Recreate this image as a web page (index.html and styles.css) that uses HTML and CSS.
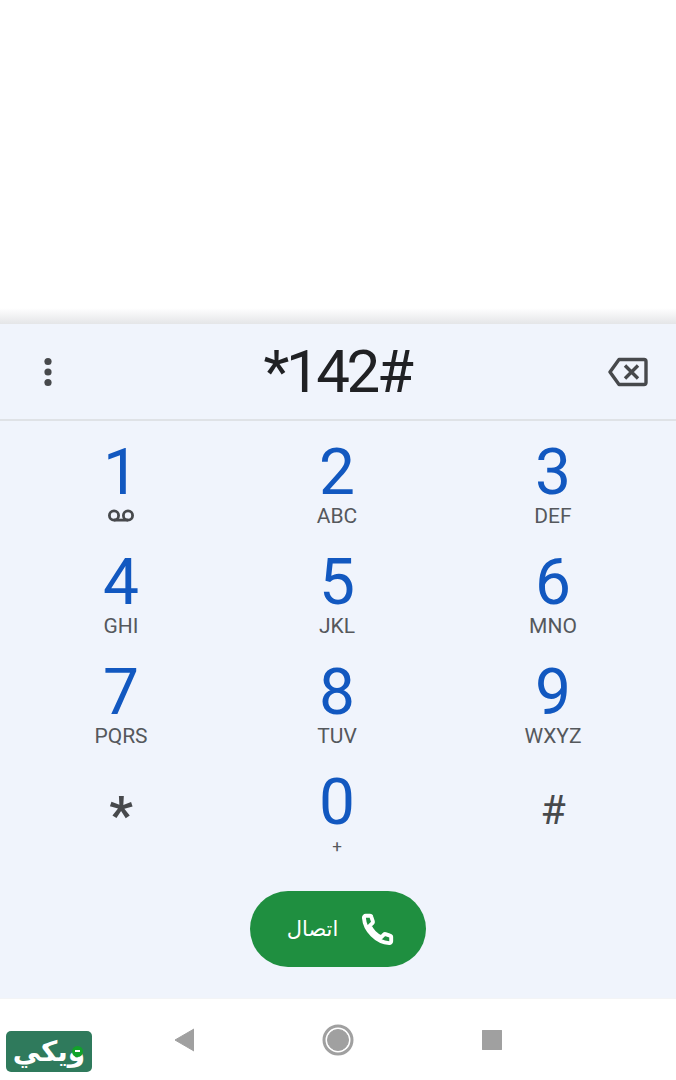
FILE: index.html
```html
<!DOCTYPE html>
<html lang="en">
<head>
    <meta charset="UTF-8">
    <title>Dialer</title>
    <link rel="stylesheet" href="styles.css">
</head>
<body>
<div class="blank"></div>
<div class="panel">
    <div class="number-bar">
        <svg class="more" width="12" height="30" viewBox="0 0 12 30">
            <circle cx="6" cy="4.5" r="3.6"/>
            <circle cx="6" cy="15" r="3.6"/>
            <circle cx="6" cy="25.5" r="3.6"/>
        </svg>
        <div class="number">*142#</div>
        <svg class="backspace" width="40" height="30" viewBox="0 0 40 30">
            <path d="M11 2.500H36a2 2 0 0 1 2 2V25.500a2 2 0 0 1-2 2H11L2 15Z"/>
            <path d="M17 8.500L30 21.500M30 8.500L17 21.500"/>
        </svg>
    </div>
    <div class="keypad">
        <div class="key"><div class="digit">1</div>
            <svg class="voicemail" width="28" height="13" viewBox="0 0 28 13">
                <circle cx="7" cy="6.500" r="4.600"/>
                <circle cx="21" cy="6.500" r="4.600"/>
                <path d="M7 11.100H21"/>
            </svg>
        </div>
        <div class="key"><div class="digit">2</div><div class="letters">ABC</div></div>
        <div class="key"><div class="digit">3</div><div class="letters">DEF</div></div>
        <div class="key"><div class="digit">4</div><div class="letters">GHI</div></div>
        <div class="key"><div class="digit">5</div><div class="letters">JKL</div></div>
        <div class="key"><div class="digit">6</div><div class="letters">MNO</div></div>
        <div class="key"><div class="digit">7</div><div class="letters">PQRS</div></div>
        <div class="key"><div class="digit">8</div><div class="letters">TUV</div></div>
        <div class="key"><div class="digit">9</div><div class="letters">WXYZ</div></div>
        <div class="key"><div class="symbol star">*</div></div>
        <div class="key"><div class="digit">0</div><div class="letters plus">+</div></div>
        <div class="key"><div class="symbol">#</div></div>
    </div>
    <div class="call-row">
        <div class="call-btn">
            <svg width="36" height="36" viewBox="0 0 24 24">
                <path d="M6.600 3.200c.5 0 .9.300 1 .8l1 3c.1.400 0 .8-.3 1.100L6.500 9.800c1.400 3.300 4.400 6.300 7.700 7.700l1.700-1.800c.3-.3.700-.4 1.100-.3l3 1c.5.100.8.500.8 1v2.800c0 .7-.6 1.300-1.300 1.200C11 20.800 3.200 13 2.600 4.400c0-.7.500-1.200 1.200-1.200Z"/>
            </svg>
            <span class="call-label" lang="ar" dir="rtl">اتصال</span>
        </div>
    </div>
</div>
<div class="nav-bar">
    <div class="logo"><span class="logo-text" lang="ar" dir="rtl">ويكي</span><span class="logo-dot"></span></div>
    <svg width="20" height="24" viewBox="0 0 20 24"><path class="nav-icon" d="M20 1V23L1 12Z"/></svg>
    <svg width="32" height="32" viewBox="0 0 32 32">
        <circle class="nav-ring" cx="16" cy="16" r="14"/>
        <circle class="nav-icon" cx="16" cy="16" r="10.500"/>
    </svg>
    <svg width="20" height="20" viewBox="0 0 20 20"><rect class="nav-icon" width="20" height="20" rx="1"/></svg>
</div>
</body>
</html>
```

FILE: styles.css
```css
body {
    margin: 0;
    background: white;
    font-family: Roboto, "DejaVu Sans", sans-serif;
}
.blank {
    height: 324px;
    background: linear-gradient(to bottom, white 308px, #e4e5e7 324px);
}
.panel {
    height: 674px;
    background: #f0f4fc;
}
.number-bar {
    height: 95px;
    border-bottom: 2px solid #dfe2e6;
    display: flex;
    align-items: center;
    justify-content: space-between;
    padding: 0 28px 0 42px;
}
.more {
    fill: #47494c;
}
.number {
    font-size: 60px;
    letter-spacing: -3.4px;
    color: #202124;
    margin-left: 12px;
}
.backspace {
    fill: none;
    stroke: #47494c;
    stroke-width: 3.4;
    stroke-linejoin: round;
}
.keypad {
    display: grid;
    grid-template-columns: repeat(3, 216px);
    grid-auto-rows: 110px;
    padding: 0 13px;
}
.key {
    display: flex;
    flex-direction: column;
    align-items: center;
    padding-top: 22px;
    box-sizing: border-box;
}
.digit {
    font-size: 64px;
    line-height: 60px;
    color: #1258c0;
}
.letters {
    font-size: 21px;
    line-height: 26px;
    color: #55585c;
}
.plus {
    font-size: 17px;
}
.voicemail {
    fill: none;
    stroke: #47494c;
    stroke-width: 2.8;
    margin-top: 6px;
}
.symbol {
    font-size: 41px;
    line-height: 60px;
    color: #47494c;
    margin-top: 7px;
}
.star {
    font-size: 52px;
    font-weight: 700;
    margin-top: 13px;
}
.call-row {
    display: flex;
    justify-content: center;
    margin-top: 30px;
}
.call-btn {
    width: 176px;
    height: 76px;
    border-radius: 38px;
    background: #1f8f40;
    display: flex;
    flex-direction: row-reverse;
    align-items: center;
    justify-content: center;
    gap: 22px;
    padding-left: 7px;
    box-sizing: border-box;
}
.call-btn svg {
    fill: none;
    stroke: white;
    stroke-width: 2.6;
    stroke-linejoin: round;
}
.call-label {
    color: white;
    font-size: 21px;
    font-family: "Noto Sans", "DejaVu Sans", sans-serif;
    margin-bottom: 3px;
}
.nav-bar {
    height: 82px;
    position: relative;
    display: flex;
    align-items: center;
    justify-content: center;
    gap: 128px;
    border-top: 1px solid #f3f4f6;
    box-sizing: border-box;
}
.nav-icon {
    fill: #a0a0a0;
    stroke: #a0a0a0;
    stroke-linejoin: round;
}
.nav-ring {
    fill: none;
    stroke: #a0a0a0;
    stroke-width: 3;
}
.logo {
    position: absolute;
    left: 6px;
    top: 32px;
    width: 86px;
    height: 41px;
    border-radius: 5px;
    background: #2f7a5c;
    display: flex;
    align-items: center;
    justify-content: center;
}
.logo-text {
    color: white;
    font-family: "DejaVu Sans", sans-serif;
    font-weight: bold;
    font-size: 28px;
    line-height: 41px;
}
.logo-dot {
    position: absolute;
    left: 66px;
    top: 15px;
    width: 11px;
    height: 11px;
    border-radius: 50%;
    background: #12a32a;
}
.logo-dot:before {
    content: " ";
    position: absolute;
    left: 3px;
    top: 4px;
    width: 5px;
    height: 2px;
    background: white;
}
```
